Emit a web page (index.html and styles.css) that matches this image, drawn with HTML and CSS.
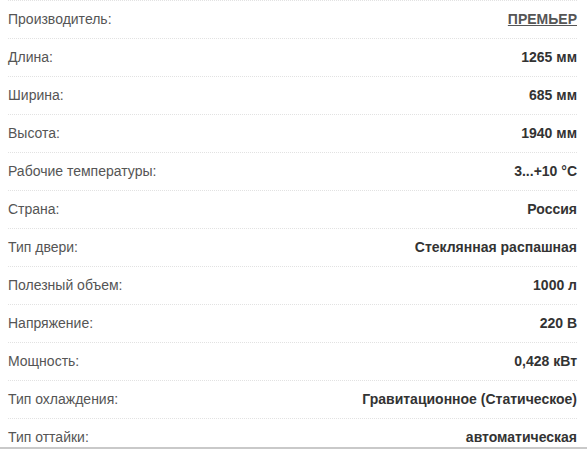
FILE: index.html
```html
<!DOCTYPE html>
<html lang="ru">
<head>
<meta charset="utf-8">
<link rel="stylesheet" href="styles.css">
</head>
<body>
<div class="specs">
  <div class="row"><span class="label">Производитель:</span><span class="value"><a class="brand" href="#">ПРЕМЬЕР</a></span></div>
  <div class="row"><span class="label">Длина:</span><span class="value">1265 мм</span></div>
  <div class="row"><span class="label">Ширина:</span><span class="value">685 мм</span></div>
  <div class="row"><span class="label">Высота:</span><span class="value">1940 мм</span></div>
  <div class="row"><span class="label">Рабочие температуры:</span><span class="value">3...+10 °С</span></div>
  <div class="row"><span class="label">Страна:</span><span class="value">Россия</span></div>
  <div class="row"><span class="label">Тип двери:</span><span class="value">Стеклянная распашная</span></div>
  <div class="row"><span class="label">Полезный объем:</span><span class="value">1000 л</span></div>
  <div class="row"><span class="label">Напряжение:</span><span class="value">220 В</span></div>
  <div class="row"><span class="label">Мощность:</span><span class="value">0,428 кВт</span></div>
  <div class="row"><span class="label">Тип охлаждения:</span><span class="value">Гравитационное (Статическое)</span></div>
  <div class="row"><span class="label">Тип оттайки:</span><span class="value">автоматическая</span></div>
</div>
</body>
</html>
```

FILE: styles.css
```css
html, body {
  margin: 0;
  padding: 0;
  background: #fff;
}
body {
  font-family: "Liberation Sans", Arial, sans-serif;
  font-size: 14px;
}
.specs {
  overflow: hidden;
  border-bottom: 2px solid #c9c9c9;
  box-sizing: border-box;
  height: 449px;
  padding: 0 10px 0 8px;
}
.row {
  display: flex;
  justify-content: space-between;
  align-items: center;
  height: 38px;
  padding-bottom: 1px;
  box-sizing: border-box;
  border-top: 1px dotted #e2e2e2;
}
.label {
  color: #555;
}
.value {
  color: #333;
  font-weight: bold;
}
.brand {
  color: #555;
  text-decoration: underline;
}
```
